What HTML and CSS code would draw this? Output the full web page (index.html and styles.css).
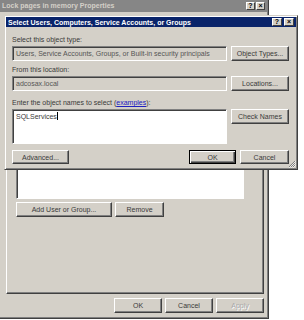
FILE: index.html
```html
<!DOCTYPE html>
<html lang="en">
<head>
  <meta charset="UTF-8">
  <title>Select Users</title>
  <link rel="stylesheet" href="styles.css">
</head>
<body>
<main class="desk">
  <section class="win backWin">
    <header class="titleBar inactive">
      <span class="titleText">Lock pages in memory Properties</span>
      <div class="titleBtns">
        <span class="tBtn">?</span>
        <span class="tBtn">&#215;</span>
      </div>
    </header>
    <div class="backBody">
      <div class="tabPage">
        <div class="listBox"></div>
        <div class="btnRow">
          <button class="btn addBtn">Add User or Group...</button>
          <button class="btn removeBtn">Remove</button>
        </div>
      </div>
      <div class="footer">
        <button class="btn footBtn">OK</button>
        <button class="btn footBtn">Cancel</button>
        <button class="btn footBtn" disabled>Apply</button>
      </div>
    </div>
  </section>

  <section class="win dlgWin">
    <header class="titleBar active">
      <span class="titleText">Select Users, Computers, Service Accounts, or Groups</span>
      <div class="titleBtns">
        <span class="tBtn">?</span>
        <span class="tBtn">&#215;</span>
      </div>
    </header>
    <div class="dlgBody">
      <div class="label">Select this object type:</div>
      <div class="fieldRow">
        <div class="field readOnly">Users, Service Accounts, Groups, or Built-in security principals</div>
        <button class="btn sideBtn">Object Types...</button>
      </div>
      <div class="label gapTop">From this location:</div>
      <div class="fieldRow">
        <div class="field readOnly">adcosax.local</div>
        <button class="btn sideBtn">Locations...</button>
      </div>
      <div class="label gapTop2">Enter the object names to select (<a class="link" href="#">examples</a>):</div>
      <div class="fieldRow">
        <div class="field textArea">SQLServices<span class="caret"></span></div>
        <button class="btn sideBtn">Check Names</button>
      </div>
      <div class="dlgFooter">
        <button class="btn advBtn">Advanced...</button>
        <div class="spacer"></div>
        <button class="btn okBtn defaultBtn">OK</button>
        <button class="btn cancelBtn">Cancel</button>
      </div>
    </div>
    <svg class="grip" width="8" height="8" viewBox="0 0 8 8">
      <path d="M7 1 L1 7 M7 3 L3 7 M7 5 L5 7" stroke="#808080" stroke-width="1"/>
      <path d="M8 1 L1 8 M8 3 L3 8 M8 5 L5 8" stroke="#ffffff" stroke-width="0.6"/>
    </svg>
  </section>
</main>
</body>
</html>
```

FILE: styles.css
```css
:root {
  --face: #d4d0c8;
  --shadow: #808080;
  --dark: #404040;
  --light: #ffffff;
  --navy: #0a246a;
  --text: #3a3a3a;
}
body {
  margin: 0;
  background: #fff;
  font-family: "Liberation Sans", Arial, sans-serif;
  font-size: 7px;
  color: var(--text);
}
.desk {
  position: relative;
  width: 304px;
  height: 320px;
  overflow: hidden;
}
.win {
  position: absolute;
  box-sizing: border-box;
  background: var(--face);
  border: 1px solid;
  border-color: var(--face) var(--dark) var(--dark) var(--face);
  box-shadow: inset 1px 1px var(--light), inset -1px -1px var(--shadow);
  padding: 1px;
  display: flex;
  flex-direction: column;
}
.backWin {
  left: -3px;
  top: -3px;
  width: 272px;
  height: 322px;
}
.dlgWin {
  left: 4px;
  top: 15px;
  width: 294px;
  height: 155px;
}
.titleBar {
  display: flex;
  align-items: center;
  justify-content: space-between;
  font-weight: bold;
  white-space: nowrap;
}
.titleBar.inactive {
  height: 13px;
  background: #868686;
  color: var(--face);
  padding-left: 3px;
}
.titleBar.active {
  height: 10px;
  background: var(--navy);
  color: #fff;
  padding-left: 2px;
}
.titleBtns {
  display: flex;
  gap: 1px;
  margin-right: 2px;
}
.tBtn {
  width: 9px;
  height: 8px;
  box-sizing: border-box;
  background: var(--face);
  color: #000;
  border: 1px solid;
  border-color: var(--light) var(--dark) var(--dark) var(--light);
  font-size: 7px;
  line-height: 6px;
  text-align: center;
}
.active .tBtn {
  width: 10px;
  margin-left: 1px;
}
.btn {
  box-sizing: border-box;
  background: var(--face);
  border: 1px solid;
  border-color: var(--light) var(--dark) var(--dark) var(--light);
  box-shadow: inset -1px -1px var(--shadow);
  font-family: inherit;
  font-size: 7px;
  color: var(--text);
  padding: 0;
  margin: 0;
  height: 15px;
  white-space: nowrap;
}
.btn:disabled {
  color: #a8a8a8;
  text-shadow: 1px 1px #fff;
}
.defaultBtn {
  border-color: #000;
  box-shadow: inset 1px 1px var(--light), inset -1px -1px var(--dark), inset -2px -2px var(--shadow);
}
/* back window */
.backBody {
  flex: 1;
  display: flex;
  flex-direction: column;
}
.tabPage {
  flex: 1;
  margin: 8px 3px 0 7px;
  border: 1px solid;
  border-color: var(--light) var(--dark) var(--dark) var(--light);
  box-shadow: inset -1px -1px var(--shadow);
  padding: 0 19px 0 9px;
}
.listBox {
  height: 176px;
  background: #fff;
  border: 1px solid;
  border-color: var(--shadow) var(--light) var(--light) var(--shadow);
  box-shadow: inset 1px 1px var(--dark);
}
.btnRow {
  display: flex;
  gap: 3px;
  margin-top: 3px;
}
.addBtn { width: 96px; }
.removeBtn { width: 49px; }
.footer {
  display: flex;
  justify-content: flex-end;
  gap: 3px;
  padding: 4px 3px 4px 0;
}
.footBtn { width: 48px; }
/* dialog */
.dlgBody {
  flex: 1;
  padding: 8px 7px 0 6px;
}
.label {
  height: 10px;
  line-height: 10px;
  white-space: nowrap;
}
.gapTop { margin-top: 4px; }
.gapTop2 { margin-top: 7px; }
.link {
  color: #2020c0;
  text-decoration: underline;
}
.fieldRow {
  display: grid;
  grid-template-columns: 1fr 58px;
  gap: 4px;
  align-items: start;
  margin-top: 1px;
}
.field {
  box-sizing: border-box;
  height: 15px;
  border: 1px solid;
  border-color: var(--shadow) var(--light) var(--light) var(--shadow);
  box-shadow: inset 1px 1px var(--dark);
  padding: 0 3px;
  line-height: 13px;
  white-space: nowrap;
  overflow: hidden;
}
.readOnly {
  background: var(--face);
  color: #555;
}
.textArea {
  height: 35px;
  background: #fff;
  line-height: 12px;
  padding-top: 1px;
}
.caret {
  display: inline-block;
  width: 1px;
  height: 8px;
  background: #000;
  vertical-align: -1px;
}
.dlgFooter {
  display: flex;
  gap: 4px;
  margin-top: 6px;
}
.spacer { flex: 1; }
.advBtn { width: 57px; height: 14px; }
.okBtn { width: 47px; height: 14px; }
.cancelBtn { width: 49px; height: 14px; }
.grip {
  position: absolute;
  right: 1px;
  bottom: 1px;
}
```
